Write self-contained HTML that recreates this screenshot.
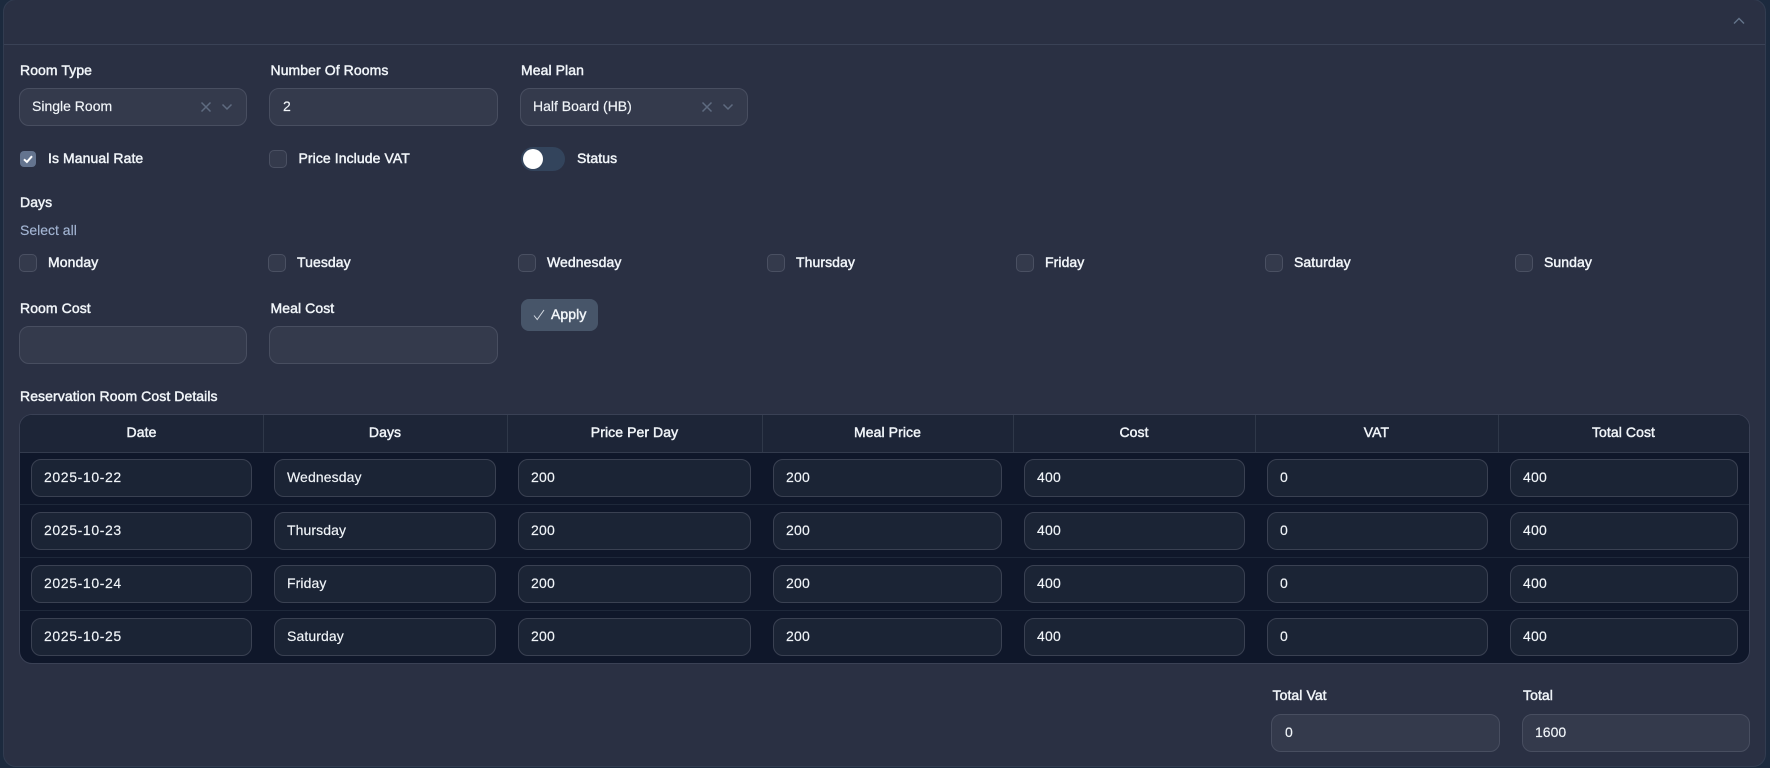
<!DOCTYPE html>
<html lang="en"><head><meta charset="utf-8"><title>Reservation Room Cost</title>
<style>
html,body{margin:0;padding:0;width:1770px;height:768px;overflow:hidden;background:#1c2a3e}
*{box-sizing:border-box}
body{font-family:"Liberation Sans",sans-serif;font-size:14px;color:#f1f5f9;position:relative}
div,svg{position:absolute}
.p{left:3px;top:-1px;width:1763px;height:768px;background:#2a3043;border:1px solid #323c50;border-radius:13px}
.l{height:20px;line-height:20px;white-space:nowrap;-webkit-text-stroke:.45px currentColor;letter-spacing:.08px}
.v{height:20px;line-height:20px;white-space:nowrap;letter-spacing:0;-webkit-text-stroke:.15px currentColor}
.f{height:38px;background:#343a4c;border:1px solid #484e60;border-radius:10px}
.cb{width:18px;height:18px;background:#343a4c;border:1px solid #4a5062;border-radius:5px}
.h{top:422px;text-align:center;height:20px;line-height:20px;-webkit-text-stroke:.45px currentColor;letter-spacing:.08px}
.rw{left:0;width:1770px;height:38px}
.i{top:0;height:38px;background:#1b2435;border:1px solid #3a4152;border-radius:10px;padding-left:12px;line-height:35px;letter-spacing:.2px;-webkit-text-stroke:.15px currentColor}
.n{letter-spacing:.62px}
.w{letter-spacing:.1px}
.d{left:20px;width:1729px;height:1px;background:#1e283a}
.c1{left:31px;width:221px}.c2{left:274px;width:222px}.c3{left:518px;width:233px}.c4{left:773px;width:229px}.c5{left:1024px;width:221px}.c6{left:1267px;width:221px}.c7{left:1510px;width:228px}
</style></head><body>
<div class="p"></div>
<div style="left:4px;top:44px;width:1761px;height:1px;background:#3a4256"></div>
<svg style="left:1733px;top:17px" width="12" height="8" viewBox="0 0 12 8"><path d="M1 6.5 6 1.5 11 6.5" fill="none" stroke="#64748b" stroke-width="1.4"/></svg>

<div class="l" style="left:20px;top:60px">Room Type</div>
<div class="l" style="left:270.5px;top:60px">Number Of Rooms</div>
<div class="l" style="left:521px;top:60px">Meal Plan</div>

<div class="f" style="left:19px;top:88px;width:228px"></div>
<div class="v" style="left:32px;top:96px">Single Room</div>
<svg style="left:200px;top:101px" width="12" height="12" viewBox="0 0 12 12"><path d="M1.5 1.5 10.5 10.5M10.5 1.5 1.5 10.5" stroke="#5f6b80" stroke-width="1.5" fill="none"/></svg>
<svg style="left:221px;top:103px" width="12" height="8" viewBox="0 0 12 8"><path d="M1.5 1.5 6 6 10.5 1.5" stroke="#5f6b80" stroke-width="1.5" fill="none"/></svg>

<div class="f" style="left:269px;top:88px;width:229px"></div>
<div class="v" style="left:283px;top:96px">2</div>

<div class="f" style="left:520px;top:88px;width:228px"></div>
<div class="v" style="left:533px;top:96px">Half Board (HB)</div>
<svg style="left:701px;top:101px" width="12" height="12" viewBox="0 0 12 12"><path d="M1.5 1.5 10.5 10.5M10.5 1.5 1.5 10.5" stroke="#5f6b80" stroke-width="1.5" fill="none"/></svg>
<svg style="left:722px;top:103px" width="12" height="8" viewBox="0 0 12 8"><path d="M1.5 1.5 6 6 10.5 1.5" stroke="#5f6b80" stroke-width="1.5" fill="none"/></svg>

<div style="left:20px;top:151px;width:16px;height:16px;background:#64748f;border-radius:4px"></div>
<svg style="left:20px;top:151px" width="16" height="16" viewBox="0 0 16 16"><path d="M4 8.3 6.9 11 12 5.2" fill="none" stroke="#fff" stroke-width="2"/></svg>
<div class="l" style="left:48px;top:148px">Is Manual Rate</div>
<div class="cb" style="left:269px;top:150px"></div>
<div class="l" style="left:298.5px;top:148px">Price Include VAT</div>
<div style="left:521px;top:147px;width:44px;height:24px;background:#33445c;border-radius:12px"></div>
<div style="left:523px;top:149px;width:20px;height:20px;background:#fff;border-radius:50%"></div>
<div class="l" style="left:577px;top:148px">Status</div>

<div class="l" style="left:20px;top:192px">Days</div>
<div class="v" style="left:20px;top:220px;color:#a3b5d3">Select all</div>

<div class="cb" style="left:19px;top:254px"></div><div class="l" style="left:48px;top:252px">Monday</div>
<div class="cb" style="left:268px;top:254px"></div><div class="l" style="left:297px;top:252px">Tuesday</div>
<div class="cb" style="left:518px;top:254px"></div><div class="l" style="left:547px;top:252px">Wednesday</div>
<div class="cb" style="left:767px;top:254px"></div><div class="l" style="left:796px;top:252px">Thursday</div>
<div class="cb" style="left:1016px;top:254px"></div><div class="l" style="left:1045px;top:252px">Friday</div>
<div class="cb" style="left:1265px;top:254px"></div><div class="l" style="left:1294px;top:252px">Saturday</div>
<div class="cb" style="left:1515px;top:254px"></div><div class="l" style="left:1544px;top:252px">Sunday</div>

<div class="l" style="left:20px;top:298px">Room Cost</div>
<div class="l" style="left:270.5px;top:298px">Meal Cost</div>
<div class="f" style="left:19px;top:326px;width:228px"></div>
<div class="f" style="left:269px;top:326px;width:229px"></div>
<div style="left:521px;top:299px;width:77px;height:32px;background:#475569;border-radius:8px"></div>
<svg style="left:533px;top:309px" width="12" height="12" viewBox="0 0 12 12"><path d="M1 6.5 4.2 10.5 11 1" fill="none" stroke="#d3d9e2" stroke-width="1"/></svg>
<div class="l" style="left:551px;top:304px">Apply</div>

<div class="l" style="left:20px;top:386px">Reservation Room Cost Details</div>

<div style="left:19px;top:414px;width:1731px;height:250px;background:#0f172a;border:1px solid #3a4155;border-radius:13px;overflow:hidden">
  <div style="left:0;top:0;width:1731px;height:38px;background:#1d2537;border-bottom:1px solid #333b4d"></div>
  <div style="left:243px;top:0;width:1px;height:37px;background:#2f3849"></div>
  <div style="left:487px;top:0;width:1px;height:37px;background:#2f3849"></div>
  <div style="left:742px;top:0;width:1px;height:37px;background:#2f3849"></div>
  <div style="left:993px;top:0;width:1px;height:37px;background:#2f3849"></div>
  <div style="left:1235px;top:0;width:1px;height:37px;background:#2f3849"></div>
  <div style="left:1478px;top:0;width:1px;height:37px;background:#2f3849"></div>
</div>
<div class="h" style="left:20px;width:243px">Date</div>
<div class="h" style="left:263px;width:244px">Days</div>
<div class="h" style="left:507px;width:255px">Price Per Day</div>
<div class="h" style="left:762px;width:251px">Meal Price</div>
<div class="h" style="left:1013px;width:242px">Cost</div>
<div class="h" style="left:1255px;width:243px">VAT</div>
<div class="h" style="left:1498px;width:251px">Total Cost</div>

<div class="rw" style="top:459px"><div class="i c1 n">2025-10-22</div><div class="i c2 w">Wednesday</div><div class="i c3">200</div><div class="i c4">200</div><div class="i c5">400</div><div class="i c6">0</div><div class="i c7">400</div></div>
<div class="d" style="top:504px"></div>
<div class="rw" style="top:512px"><div class="i c1 n">2025-10-23</div><div class="i c2 w">Thursday</div><div class="i c3">200</div><div class="i c4">200</div><div class="i c5">400</div><div class="i c6">0</div><div class="i c7">400</div></div>
<div class="d" style="top:557px"></div>
<div class="rw" style="top:565px"><div class="i c1 n">2025-10-24</div><div class="i c2 w">Friday</div><div class="i c3">200</div><div class="i c4">200</div><div class="i c5">400</div><div class="i c6">0</div><div class="i c7">400</div></div>
<div class="d" style="top:610px"></div>
<div class="rw" style="top:618px"><div class="i c1 n">2025-10-25</div><div class="i c2 w">Saturday</div><div class="i c3">200</div><div class="i c4">200</div><div class="i c5">400</div><div class="i c6">0</div><div class="i c7">400</div></div>

<div class="l" style="left:1272.5px;top:685px">Total Vat</div>
<div class="l" style="left:1523px;top:685px">Total</div>
<div class="f" style="left:1271px;top:714px;width:229px"></div>
<div class="v" style="left:1285px;top:722px">0</div>
<div class="f" style="left:1522px;top:714px;width:228px"></div>
<div class="v" style="left:1535px;top:722px">1600</div>
</body></html>
